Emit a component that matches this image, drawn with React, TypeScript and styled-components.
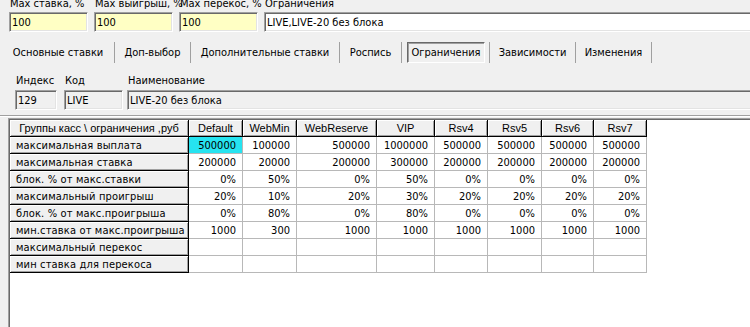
import React from "react";
import styled, { createGlobalStyle } from "styled-components";

const GlobalStyle = createGlobalStyle`
  html, body { margin: 0; padding: 0; background: #f0f0f0; overflow: hidden; }
  body { font-family: "DejaVu Sans Condensed", "DejaVu Sans", "Liberation Sans", sans-serif; font-size: 11px; color: #000; }
`;

const Root = styled.div`
  width: 750px;
  height: 327px;
  overflow: hidden;
  display: flex;
  flex-direction: column;
  background: #f0f0f0;
`;

const TopLabels = styled.div`
  display: grid;
  grid-template-columns: 79px 79px 79px 600px;
  column-gap: 6px;
  padding-left: 9px;
  margin-top: -3px;
  height: 12px;
  line-height: 13px;
  white-space: nowrap;
`;

const TopLabel = styled.span`
  padding-left: 1px;
  color: #000;
`;

const TopFields = styled.div`
  display: grid;
  grid-template-columns: 79px 79px 79px 600px;
  column-gap: 6px;
  padding-left: 9px;
  margin-top: 3px;
`;

const Field = styled.div<{ $bg?: string; $w?: number }>`
  box-sizing: border-box;
  height: 20px;
  ${(p) => (p.$w ? `width: ${p.$w}px;` : "")}
  background: ${(p) => p.$bg || "#fff"};
  border: 1px solid;
  border-color: #a0a0a0 #fff #fff #a0a0a0;
  box-shadow: inset 1px 1px 0 #696969, inset -1px -1px 0 #e3e3e3;
  padding: 0 2px 0 2px;
  display: flex;
  align-items: center;
  font-size: 11px;
  white-space: nowrap;
  overflow: hidden;
`;

const TabBar = styled.div`
  display: flex;
  margin-top: 10px;
  padding-left: 2px;
  height: 21px;
`;

const Tab = styled.div<{ $w: number }>`
  box-sizing: border-box;
  width: ${(p) => p.$w}px;
  height: 21px;
  border-right: 1px solid #a0a0a0;
  display: flex;
  align-items: center;
  justify-content: center;
  white-space: nowrap;
`;

const TabLabel = styled.span<{ $active?: boolean }>`
  ${(p) =>
    p.$active
      ? `
    box-sizing: border-box;
    align-self: stretch;
    flex: 1;
    margin: 0 4px 0 5px;
    display: flex;
    align-items: center;
    justify-content: center;
    border: 1px solid;
    border-color: #696969 #fff #fff #696969;
    box-shadow: inset 1px 1px 0 #a0a0a0;
  `
      : ""}
`;

const InfoLabels = styled.div`
  display: grid;
  grid-template-columns: 49px 63px 1fr;
  padding-left: 15px;
  margin-top: 11px;
  height: 13px;
  line-height: 13px;
`;

const InfoLabel = styled.span`
  padding-left: 1px;
`;

const InfoFields = styled.div`
  display: grid;
  grid-template-columns: 49px 63px 700px;
  padding-left: 15px;
  margin-top: 3px;
`;

const Divider = styled.div`
  margin-top: 5px;
  height: 0;
  border-top: 1px solid #a0a0a0;
  border-bottom: 1px solid #fff;
`;

const GridFrame = styled.div`
  flex: 1;
  margin-top: 1px;
  margin-left: 8px;
  background: #fff;
  border-top: 1px solid #a0a0a0;
  border-left: 1px solid #a0a0a0;
  box-shadow: inset 1px 1px 0 #696969;
  padding: 1px 0 0 1px;
`;

const DataGrid = styled.div`
  display: grid;
  grid-template-columns: 179px 54px 54px 80px 58px 53px 54px 52px 53px;
  grid-auto-rows: 17px;
  width: max-content;
`;

const FixedCell = styled.div<{ $center?: boolean }>`
  box-sizing: border-box;
  background: #f0f0f0;
  border-right: 1px solid #000;
  border-bottom: 1px solid #000;
  box-shadow: inset 1px 1px 0 #fff, inset -1px -1px 0 #a0a0a0;
  display: flex;
  align-items: center;
  justify-content: ${(p) => (p.$center ? "center" : "flex-start")};
  padding-left: ${(p) => (p.$center ? 0 : 6)}px;
  white-space: nowrap;
  overflow: hidden;
  font-size: 11px;
  letter-spacing: 0.15px;
`;

const HeadCell = styled(FixedCell)`
  font-family: "Liberation Sans", Arial, sans-serif;
  font-size: 11px;
  letter-spacing: 0;
`;

const Cell = styled.div<{ $selected?: boolean }>`
  box-sizing: border-box;
  background: ${(p) => (p.$selected ? "#26e3f0" : "#fff")};
  border-right: 1px solid #b8b8b8;
  border-bottom: 1px solid #b8b8b8;
  display: flex;
  align-items: center;
  justify-content: flex-end;
  padding-right: 6px;
  white-space: nowrap;
  font-size: 11px;
`;

const topLabels = ["Max ставка, %", "Max выигрыш, %", "Max перекос, %", "Ограничения"];
const topValues = ["100", "100", "100", "LIVE,LIVE-20 без блока"];

const tabs: { label: string; w: number; active?: boolean }[] = [
  { label: "Основные ставки", w: 113 },
  { label: "Доп-выбор", w: 76 },
  { label: "Дополнительные ставки", w: 149 },
  { label: "Роспись", w: 62 },
  { label: "Ограничения", w: 88, active: true },
  { label: "Зависимости", w: 86 },
  { label: "Изменения", w: 76 },
];

const columns = ["Default", "WebMin", "WebReserve", "VIP", "Rsv4", "Rsv5", "Rsv6", "Rsv7"];

const rows: { label: string; values: string[] }[] = [
  { label: "максимальная выплата", values: ["500000", "100000", "500000", "1000000", "500000", "500000", "500000", "500000"] },
  { label: "максимальная ставка", values: ["200000", "20000", "200000", "300000", "200000", "200000", "200000", "200000"] },
  { label: "блок. % от макс.ставки", values: ["0%", "50%", "0%", "50%", "0%", "0%", "0%", "0%"] },
  { label: "максимальный проигрыш", values: ["20%", "10%", "20%", "30%", "20%", "20%", "20%", "20%"] },
  { label: "блок. % от макс.проигрыша", values: ["0%", "80%", "0%", "80%", "0%", "0%", "0%", "0%"] },
  { label: "мин.ставка от макс.проигрыша", values: ["1000", "300", "1000", "1000", "1000", "1000", "1000", "1000"] },
  { label: "максимальный перекос", values: ["", "", "", "", "", "", "", ""] },
  { label: "мин ставка для перекоса", values: ["", "", "", "", "", "", "", ""] },
];

export default function App() {
  return (
    <Root>
      <GlobalStyle />
      <TopLabels>
        {topLabels.map((l) => (
          <TopLabel key={l}>{l}</TopLabel>
        ))}
      </TopLabels>
      <TopFields>
        {topValues.map((v, i) => (
          <Field key={i} $bg={i < 3 ? "#ffffc4" : "#fff"}>
            {v}
          </Field>
        ))}
      </TopFields>
      <TabBar>
        {tabs.map((t) => (
          <Tab key={t.label} $w={t.w}>
            <TabLabel $active={t.active}>{t.label}</TabLabel>
          </Tab>
        ))}
      </TabBar>
      <InfoLabels>
        <InfoLabel>Индекс</InfoLabel>
        <InfoLabel>Код</InfoLabel>
        <InfoLabel>Наименование</InfoLabel>
      </InfoLabels>
      <InfoFields>
        <Field $bg="#f0f0f0" $w={42}>129</Field>
        <Field $bg="#f0f0f0" $w={59}>LIVE</Field>
        <Field $bg="#f0f0f0">LIVE-20 без блока</Field>
      </InfoFields>
      <Divider />
      <GridFrame>
        <DataGrid>
          <HeadCell $center>Группы касс \ ограничения ,руб</HeadCell>
          {columns.map((c) => (
            <HeadCell key={c} $center>
              {c}
            </HeadCell>
          ))}
          {rows.map((r, ri) => (
            <React.Fragment key={r.label}>
              <FixedCell>{r.label}</FixedCell>
              {r.values.map((v, ci) => (
                <Cell key={ci} $selected={ri === 0 && ci === 0}>
                  {v}
                </Cell>
              ))}
            </React.Fragment>
          ))}
        </DataGrid>
      </GridFrame>
    </Root>
  );
}
